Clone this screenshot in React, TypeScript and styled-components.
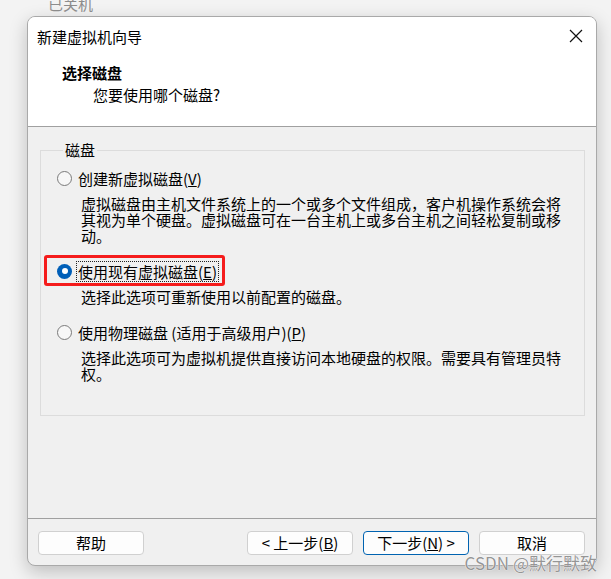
import React from "react";
import styled, { createGlobalStyle } from "styled-components";

const GlobalStyle = createGlobalStyle`
  html, body { margin: 0; padding: 0; }
  body {
    background: #f2f2f2;
    font-family: "Noto Sans CJK SC", "Noto Sans", sans-serif;
    width: 611px;
    height: 579px;
    overflow: hidden;
    color: #000;
  }
`;

const Page = styled.div`
  position: relative;
  width: 611px;
  height: 579px;
  padding-left: 27px;
  box-sizing: border-box;
  background: #f3f3f3;
`;

const BackLabel = styled.div`
  height: 16px;
  line-height: 8px;
  padding-left: 21px;
  font-size: 15px;
  color: #8c8c8c;
`;

const Dialog = styled.div`
  width: 570px;
  height: 550px;
  box-sizing: border-box;
  border: 1px solid #a9a9a9;
  border-radius: 8px;
  overflow: hidden;
  background: #f0f0f0;
  display: flex;
  flex-direction: column;
  box-shadow: 0 6px 18px rgba(0, 0, 0, 0.22);
`;

const Header = styled.div`
  height: 110px;
  box-sizing: border-box;
  background: #ffffff;
  border-bottom: 1px solid #a0a0a0;
`;

const TitleBar = styled.div`
  height: 38px;
  display: flex;
  align-items: center;
  justify-content: space-between;
  padding: 0 13px 0 9px;
  font-size: 15px;
`;

const CloseButton = styled.div`
  width: 14px;
  height: 14px;
  display: flex;
`;

const Heading = styled.div`
  margin-top: 8px;
  padding-left: 34px;
  font-size: 15px;
  line-height: 20px;
  font-weight: 700;
`;

const SubHeading = styled.div`
  margin-top: 2px;
  padding-left: 65px;
  font-size: 15px;
  line-height: 20px;
`;

const Body = styled.div`
  flex: 1;
  padding: 13px 11px 0 12px;
`;

const Group = styled.fieldset`
  margin: 0;
  border: 1px solid #dcdcdc;
  padding: 8px 0 33px 16px;
  min-width: 0;
`;

const Legend = styled.legend`
  margin-left: 6px;
  padding: 0 2px;
  font-size: 15px;
  line-height: 20px;
`;

const Options = styled.div`
  display: flex;
  flex-direction: column;
  gap: 17px;
`;

const Option = styled.div`
  display: flex;
  flex-direction: column;
`;

const RadioRow = styled.div`
  position: relative;
  display: flex;
  align-items: center;
  gap: 5px;
  height: 20px;
  font-size: 15px;
  line-height: 20px;
`;

const Radio = styled.span<{ $checked?: boolean }>`
  width: 15px;
  height: 15px;
  box-sizing: border-box;
  border-radius: 50%;
  flex: none;
  display: flex;
  align-items: center;
  justify-content: center;
  border: ${(p) => (p.$checked ? "none" : "1px solid #7a7a7a")};
  background: ${(p) => (p.$checked ? "#005fb8" : "#f7f7f7")};
  &::after {
    content: "";
    display: ${(p) => (p.$checked ? "block" : "none")};
    width: 6px;
    height: 6px;
    border-radius: 50%;
    background: #ffffff;
  }
`;

const Label = styled.span<{ $focused?: boolean }>`
  padding: 0 1px;
  margin-left: -1px;
  line-height: 19px;
  border: 1px ${(p) => (p.$focused ? "dotted #222" : "solid transparent")};
`;

const Highlight = styled.div`
  position: absolute;
  left: -13px;
  top: -6px;
  width: 181px;
  height: 31px;
  box-sizing: border-box;
  border: 3px solid #f51c1c;
  border-radius: 3px;
  pointer-events: none;
`;

const Desc = styled.div`
  margin-top: 8px;
  margin-left: 24px;
  width: 486px;
  font-size: 15px;
  line-height: 16px;
`;

const Footer = styled.div`
  height: 47px;
  box-sizing: border-box;
  border-top: 1px solid #a0a0a0;
  display: flex;
  align-items: flex-start;
  padding: 12px 11px 0 10px;
  gap: 10px;
`;

const Spacer = styled.div`
  flex: 1;
`;

const Button = styled.div<{ $primary?: boolean }>`
  width: 106px;
  height: 24px;
  box-sizing: border-box;
  border: 1px solid ${(p) => (p.$primary ? "#0063b1" : "#d0d0d0")};
  border-radius: 4px;
  background: #fdfdfd;
  font-size: 15px;
  line-height: 22px;
  text-align: center;
  white-space: pre;
`;

const Watermark = styled.div`
  position: absolute;
  right: 14px;
  top: 552px;
  font-size: 17px;
  line-height: 22px;
  color: rgba(130, 130, 130, 0.85);
  text-shadow: 0 0 1px #ffffff, 0 0 1px #ffffff;
  pointer-events: none;
`;

export default function App() {
  return (
    <>
      <GlobalStyle />
      <Page>
        <BackLabel>已关机</BackLabel>
        <Dialog>
          <Header>
            <TitleBar>
              <span>新建虚拟机向导</span>
              <CloseButton>
                <svg width="14" height="14" viewBox="0 0 14 14">
                  <path d="M1 1 L13 13 M13 1 L1 13" stroke="#111" strokeWidth="1.2" fill="none" />
                </svg>
              </CloseButton>
            </TitleBar>
            <Heading>选择磁盘</Heading>
            <SubHeading>您要使用哪个磁盘?</SubHeading>
          </Header>
          <Body>
            <Group>
              <Legend>磁盘</Legend>
              <Options>
                <Option>
                  <RadioRow>
                    <Radio />
                    <Label>
                      创建新虚拟磁盘(<u>V</u>)
                    </Label>
                  </RadioRow>
                  <Desc>
                    虚拟磁盘由主机文件系统上的一个或多个文件组成，客户机操作系统会将其视为单个硬盘。虚拟磁盘可在一台主机上或多台主机之间轻松复制或移动。
                  </Desc>
                </Option>
                <Option>
                  <RadioRow>
                    <Radio $checked />
                    <Label $focused>
                      使用现有虚拟磁盘(<u>E</u>)
                    </Label>
                    <Highlight />
                  </RadioRow>
                  <Desc>选择此选项可重新使用以前配置的磁盘。</Desc>
                </Option>
                <Option>
                  <RadioRow>
                    <Radio />
                    <Label>
                      使用物理磁盘 (适用于高级用户)(<u>P</u>)
                    </Label>
                  </RadioRow>
                  <Desc>
                    选择此选项可为虚拟机提供直接访问本地硬盘的权限。需要具有管理员特权。
                  </Desc>
                </Option>
              </Options>
            </Group>
          </Body>
          <Footer>
            <Button>帮助</Button>
            <Spacer />
            <Button>
              {"< 上一步("}
              <u>B</u>
              {")"}
            </Button>
            <Button $primary>
              {"下一步("}
              <u>N</u>
              {") >"}
            </Button>
            <Button>取消</Button>
          </Footer>
        </Dialog>
        <Watermark>CSDN @默行默致</Watermark>
      </Page>
    </>
  );
}
